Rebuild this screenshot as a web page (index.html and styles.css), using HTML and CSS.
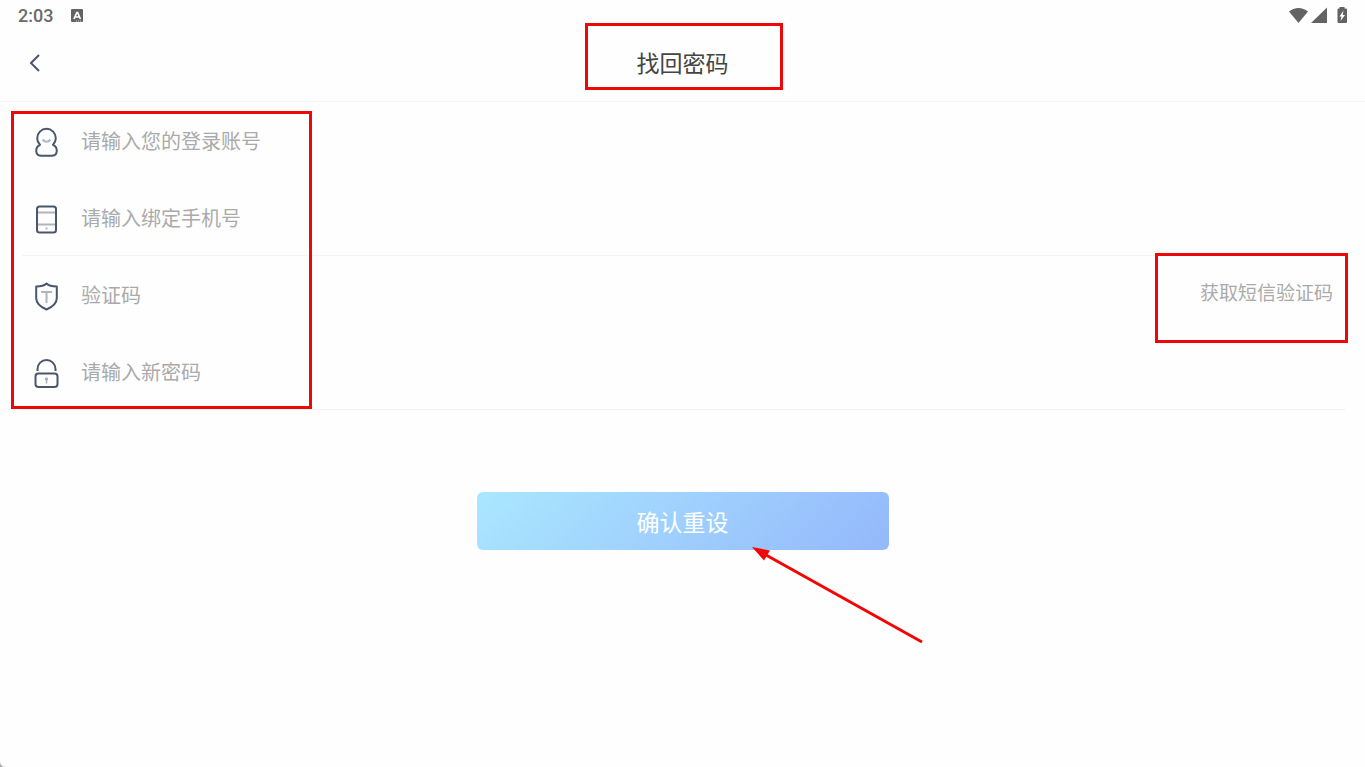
FILE: index.html
```html
<!DOCTYPE html>
<html lang="zh-CN">
<head>
<meta charset="utf-8">
<meta name="viewport" content="width=device-width, initial-scale=1">
<title>找回密码</title>
<link rel="stylesheet" href="styles.css">
</head>
<body>
<div class="status">
  <div class="status-group">
    <span class="clock">2:03</span>
    <svg class="status-app" viewBox="0 0 14 14" aria-hidden="true"><rect x="1" width="12" height="13" rx="1" fill="#636363"/><path d="M4 10 6.800 3.500h.8L10.400 10M5.200 8h4" fill="none" stroke="#fff" stroke-width="1.700"/><path d="M6 12h6" stroke="#fff" stroke-width=".8" stroke-dasharray="1 1"/></svg>
  </div>
  <div class="status-group">
    <svg class="status-icons" viewBox="0 0 60 18" aria-hidden="true" fill="#636363">
      <path d="M0 4.500C5.500-.3 13.500-.3 19 4.500L9.500 16Z"/>
      <path d="M38 .5V16H22Z"/>
      <path d="M50.500 0h5v1.500h1.500q1 0 1 1V15q0 1-1 1h-7.500q-1 0-1-1V2.500q0-1 1-1h1Z"/>
      <path d="m54.500 3.500-4 6h2L51.500 14l4.500-6h-2.300Z" fill="#fff"/>
    </svg>
  </div>
</div>

<header class="header">
  <button class="back" type="button" aria-label="返回"><svg viewBox="0 0 12 20" aria-hidden="true"><path d="M10 2 2 10l8 8"/></svg></button>
  <h1 class="title">找回密码</h1>
  <span class="mark mark-title"></span>
</header>

<main class="main">
  <form class="form">
    <div class="fields">
      <div class="row">
        <label class="label" for="account" aria-label="登录账号"><svg class="icon" viewBox="0 0 30 36" aria-hidden="true"><path d="M8 22.800A9.300 9.300 0 1 1 21 22.800C26.500 25.500 26 33.800 19.500 33.800h-10C3 33.800 2.500 25.500 8 22.800Z"/><path class="soft" d="M10.500 17.500q4 4.500 8 0"/></svg></label>
        <input class="input" id="account" type="text" placeholder="请输入您的登录账号">
      </div>
      <div class="row row-line">
        <label class="label" for="phone" aria-label="手机号"><svg class="icon" viewBox="0 0 30 36" aria-hidden="true"><path class="soft" d="M5 13.500h19M5 25.500h19M14.500 28.500v2"/><rect x="5" y="7.500" width="19" height="26" rx="2.500"/></svg></label>
        <input class="input" id="phone" type="tel" placeholder="请输入绑定手机号">
      </div>
      <div class="row">
        <label class="label" for="code" aria-label="验证码"><svg class="icon" viewBox="0 0 30 36" aria-hidden="true"><path d="M14.500 7.500q-3 3-10.300 3V22c0 6 4.500 9 10.300 11.500C20.300 31 24.800 28 24.800 22V10.500Q17.500 10.500 14.500 7.500Z"/><path class="soft" d="M9 16h11M14.500 16v11"/></svg></label>
        <input class="input" id="code" type="text" placeholder="验证码">
        <button class="send" type="button">获取短信验证码</button>
        <span class="mark mark-code"></span>
      </div>
      <div class="row row-line">
        <label class="label" for="password" aria-label="新密码"><svg class="icon" viewBox="0 0 30 36" aria-hidden="true"><path d="M5.500 18v-2a9 9 0 0 1 18 0v2"/><rect x="3.500" y="20.500" width="22" height="13.500" rx="3"/><path d="M14.500 26v4.500" stroke="#a9aeb8" stroke-width="1.500"/><circle cx="14.500" cy="26" r="1.200" fill="#a9aeb8" stroke="#a9aeb8" stroke-width="1"/></svg></label>
        <input class="input" id="password" type="password" placeholder="请输入新密码">
      </div>
      <span class="mark mark-fields"></span>
    </div>
    <div class="actions">
      <button class="submit" type="button">确认重设</button>
      <svg class="arrow" viewBox="0 0 172 98" aria-hidden="true"><path d="m14 8 156 87" stroke="#f20505" stroke-width="3"/><path d="m0 0 18 3.500-6 10Z" fill="#f20505"/></svg>
    </div>
  </form>
</main>
<svg class="corner" viewBox="0 0 6 6" aria-hidden="true"><path d="M0 0Q0 6 6 6H0Z" fill="#aaa"/></svg>
</body>
</html>
```
FILE: styles.css
```css
* {
  box-sizing: border-box;
}

body {
  display: flex;
  flex-direction: column;
  min-height: 100vh;
  margin: 0;
  background: #fefefe;
  color: #444;
  font-family: "Noto Sans CJK SC", sans-serif;
}

button,
input {
  border: 0;
  padding: 0;
  background: none;
  font: inherit;
}

.main {
  flex: 1;
}

.status {
  display: flex;
  justify-content: space-between;
  align-items: center;
  height: 32px;
  padding: 0 16px 0 18px;
}

.status-group {
  display: flex;
  align-items: center;
  gap: 17px;
}

.clock {
  color: #6a6a6a;
  font: 500 18px/32px Roboto, sans-serif;
}

.status-app {
  width: 14px;
  height: 14px;
}

.status-icons {
  width: 60px;
  height: 18px;
}

.header {
  position: relative;
  display: flex;
  align-items: center;
  justify-content: center;
  height: 70px;
  padding-bottom: 10px;
  border-bottom: 1px solid #f4f4f4;
}

.back {
  position: absolute;
  left: 20px;
  top: 11px;
  display: grid;
  place-items: center;
  width: 30px;
  height: 40px;
}

.back svg {
  width: 12px;
  height: 20px;
  fill: none;
  stroke: #4a566b;
  stroke-width: 2;
}

.title {
  margin: 0;
  font-size: 23px;
  font-weight: 400;
  line-height: 32px;
}

.fields {
  position: relative;
  padding: 0 20px 0 22px;
}

.row {
  position: relative;
  display: flex;
  align-items: center;
  height: 77px;
  padding: 0 12px 0 10px;
  border-bottom: 1px solid transparent;
}

.row-line {
  border-color: #f4f4f4;
}

.label {
  display: flex;
  margin-right: 19px;
}

.icon {
  width: 30px;
  height: 36px;
  fill: none;
  stroke: #4a566b;
  stroke-width: 2;
  stroke-linejoin: round;
}

.icon .soft {
  stroke: #b0b4bd;
}

.input {
  flex: 1;
  min-width: 0;
  height: 40px;
  color: #444;
  font-size: 20px;
  outline: 0;
}

.input::placeholder {
  color: #aaa;
  opacity: 1;
}

.send {
  padding-bottom: 4px;
  color: #aaa;
  font-size: 19px;
  line-height: 28px;
}

.actions {
  position: relative;
  display: flex;
  justify-content: center;
  padding: 82px 20px 100px;
}

.submit {
  width: 412px;
  max-width: 100%;
  height: 58px;
  border-radius: 6px;
  background: linear-gradient(135deg, #aae7ff, #94b8fb);
  color: #fff;
  font-size: 23px;
}

.mark {
  position: absolute;
  border: 3px solid #ec0808;
  pointer-events: none;
}

.mark-title {
  top: -9px;
  left: calc(50% - 98px);
  width: 198px;
  height: 67px;
}

.mark-fields {
  top: 9px;
  left: 11px;
  width: 301px;
  height: 298px;
}

.mark-code {
  top: -3px;
  right: -3px;
  width: 193px;
  height: 90px;
}

.arrow {
  position: absolute;
  top: 137px;
  left: calc(50% + 69px);
  width: 172px;
  height: 98px;
  pointer-events: none;
}

.corner {
  position: fixed;
  bottom: 0;
  left: 0;
  width: 6px;
  height: 6px;
}
```
